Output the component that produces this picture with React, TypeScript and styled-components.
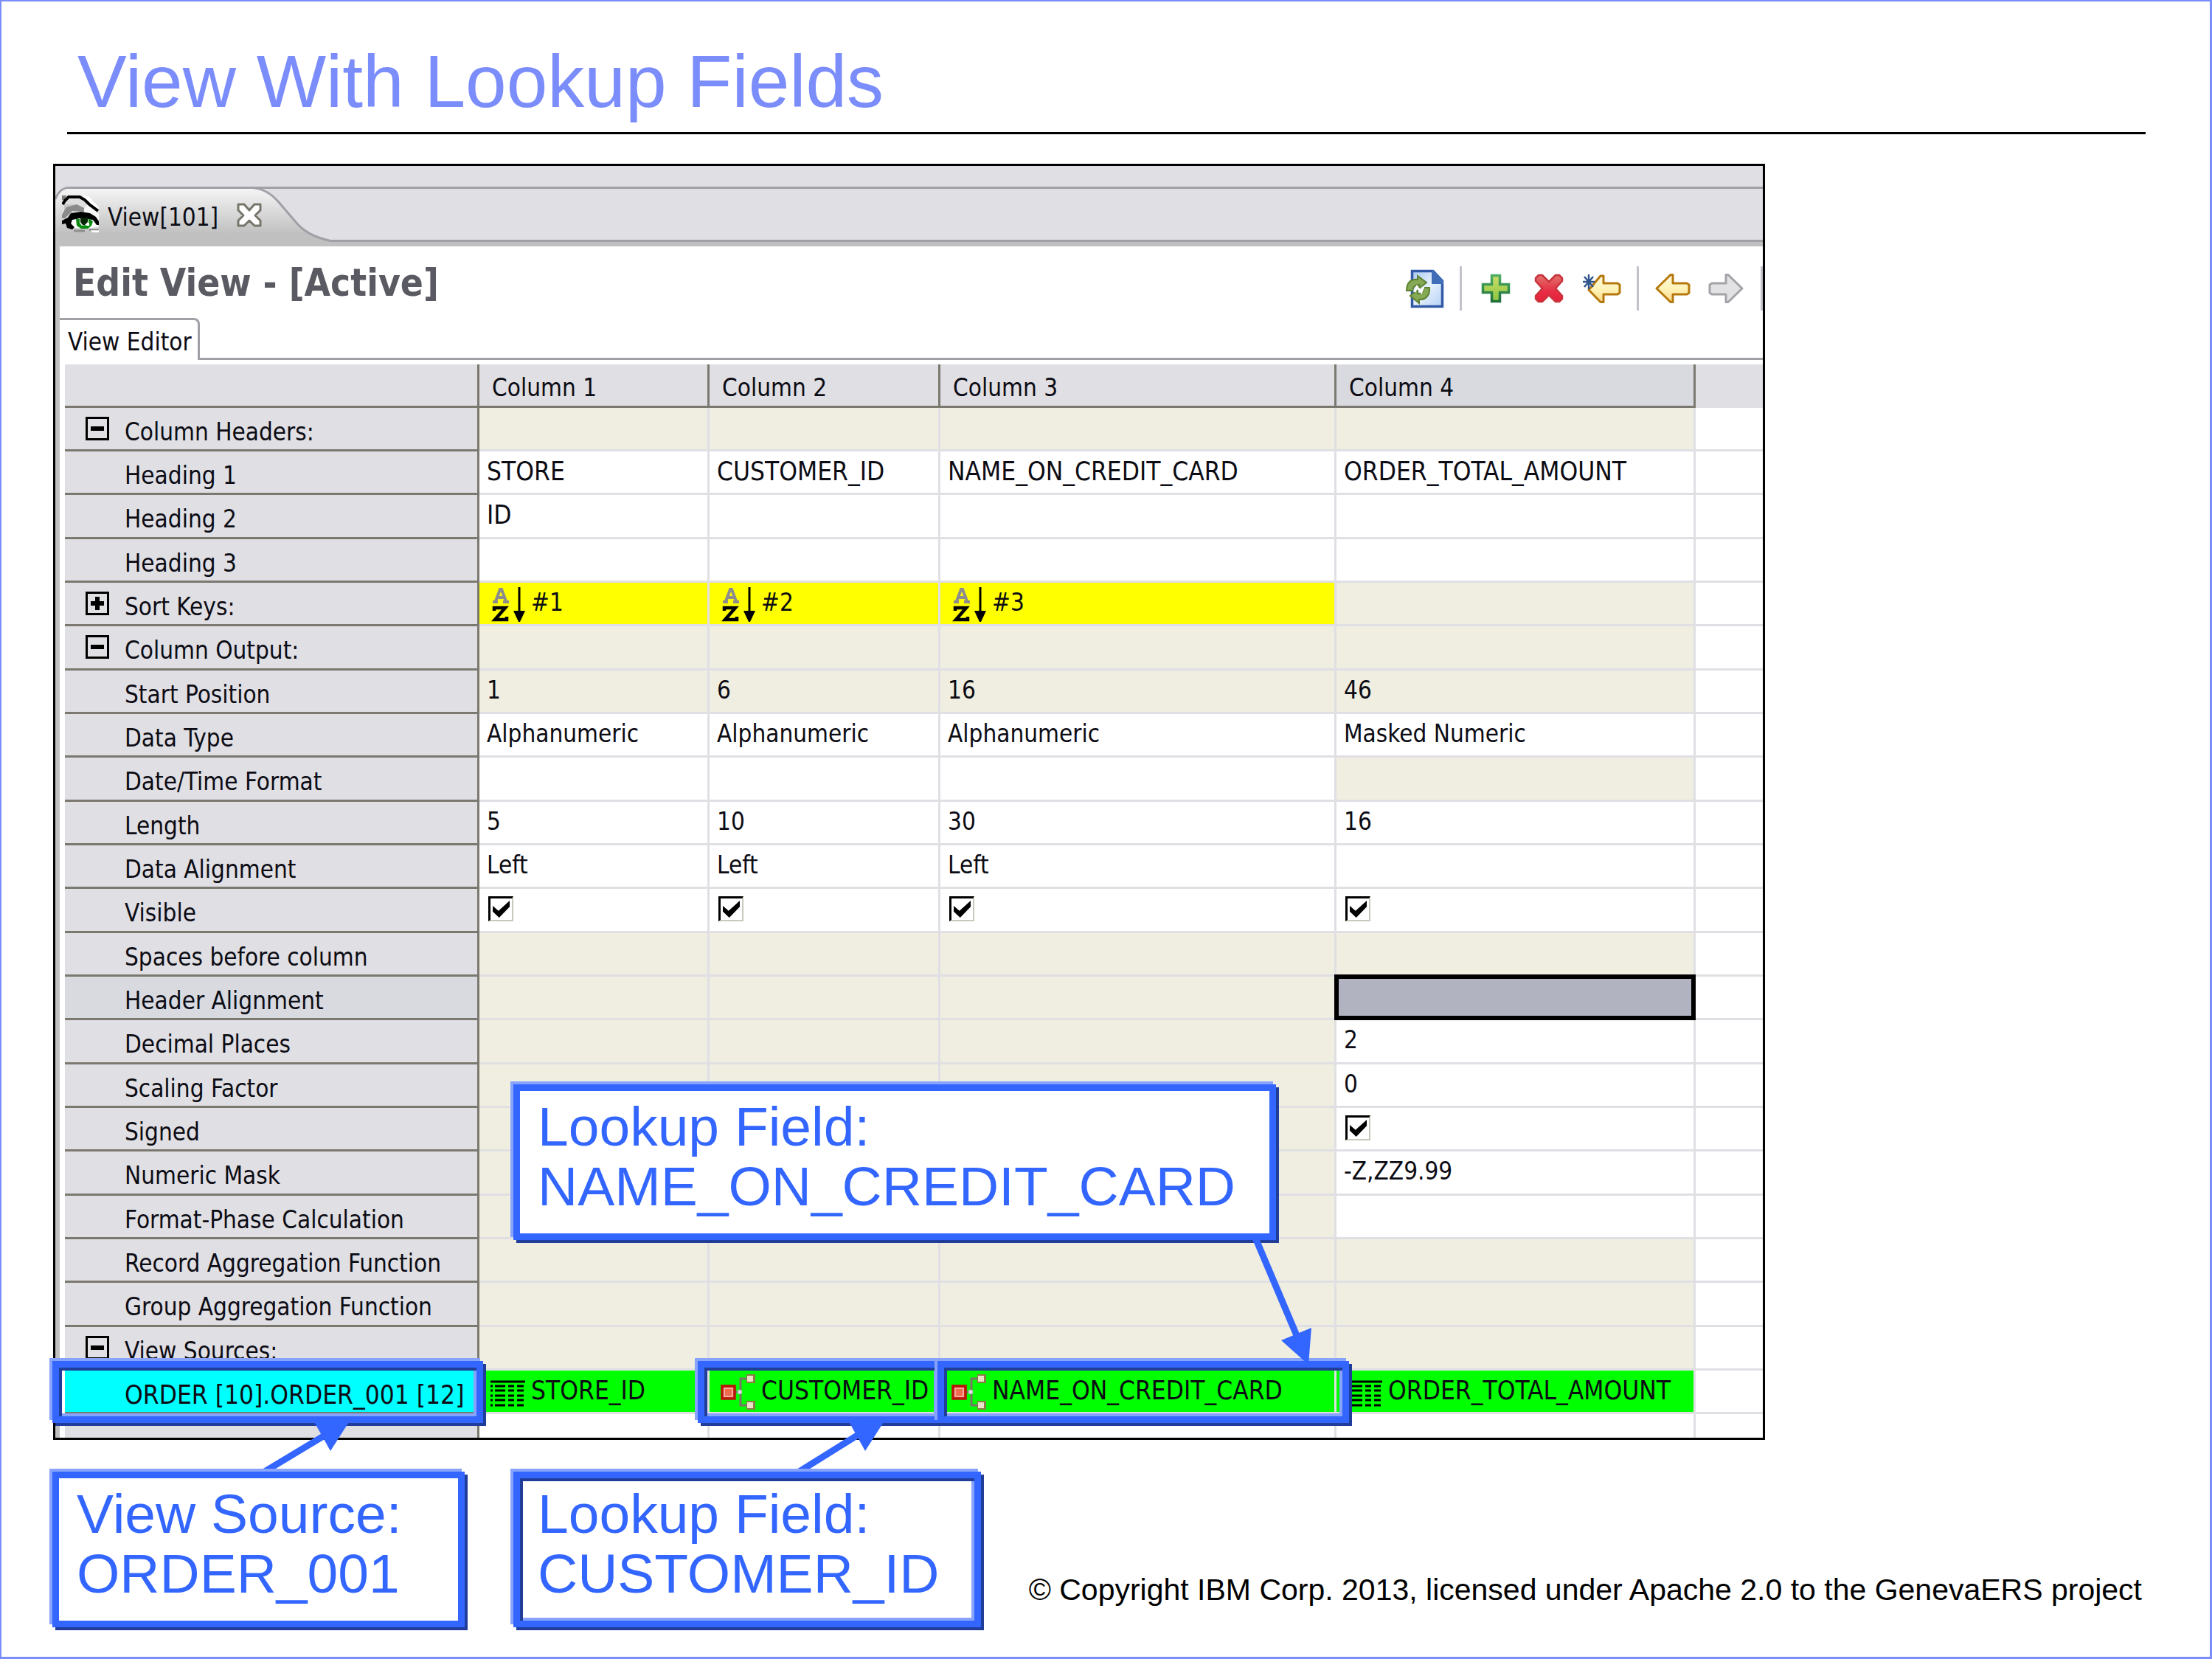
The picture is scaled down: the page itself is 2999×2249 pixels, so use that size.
import React from "react";
import styled, { createGlobalStyle, css } from "styled-components";

const ui = '"DejaVu Sans Condensed", "DejaVu Sans", "Noto Sans", sans-serif';
const slideFont = '"Liberation Sans", Arial, sans-serif';

const color = {
  accent: "#7b8cfb",
  blue: "#3366ff",
  blueLight: "#87a3fb",
  blueDark: "#1f3d99",
  chrome: "#e0dfe4",
  chromeActive: "#d8dae0",
  chromeLine: "#a0a0a6",
  band: "#c0c0c0",
  gridDark: "#7b796f",
  gridLight: "#e0dfe4",
  readOnly: "#f0eee1",
};

const GlobalStyle = createGlobalStyle`
  *, *::before, *::after { box-sizing: border-box; }
  body { margin: 0; background: #fff; }
`;

/* ---------- slide ---------- */

const Slide = styled.main`
  position: relative;
  min-height: 100vh;
  padding-top: 52px;
  background: #fff;
  font-family: ${slideFont};
  overflow: hidden;

  &::after {
    content: "";
    position: absolute;
    inset: 0;
    border: 2px solid ${color.accent};
    border-right-width: 3px;
    border-bottom-width: 3px;
    pointer-events: none;
  }
`;

const SlideHeader = styled.header`
  margin: 0 90px 40px 91px;
  padding: 0 0 11px 14px;
  border-bottom: 3px solid #000;
`;

const SlideTitle = styled.h1`
  margin: 0;
  font-size: 100px;
  line-height: 116px;
  font-weight: 400;
  color: ${color.accent};
`;

const SlideFooter = styled.footer`
  display: flex;
  align-items: flex-start;
  gap: 66px;
  margin: 43px 95px 0 71px;
`;

const Copyright = styled.p`
  flex: 1;
  margin: 136px 0 0 -66px;
  font-size: 41px;
  line-height: 48px;
  text-align: right;
  white-space: nowrap;
  color: #000;
`;

/* ---------- application window ---------- */

const Window = styled.section`
  max-width: 2321px;
  margin-left: 72px;
  border: 3px solid #000;
  background: ${color.chrome};
  font-family: ${ui};
  font-size: 33px;
  line-height: 40px;
  color: #0c0c14;
  overflow: hidden;
`;

const EditorTabs = styled.div`
  display: flex;
  height: 75px;
  margin-top: 28px;
  border-top: 3px solid ${color.chromeLine};
  border-bottom: 3px solid ${color.chromeLine};
`;

const EditorTab = styled.div`
  position: relative;
  display: flex;
  align-items: flex-start;
  width: 380px;
  padding: 9px 0 0 9px;
`;

const TabShape = styled.svg`
  position: absolute;
  left: 0;
  top: -3px;
  width: 380px;
  height: 75px;
`;

const TabIcon = styled.svg`
  position: relative;
  width: 50px;
  height: 50px;
`;

const TabLabel = styled.span`
  position: relative;
  margin: 10px 24px 0 12px;
`;

const CloseButton = styled.button`
  position: relative;
  width: 36px;
  height: 36px;
  margin-top: 8px;
  padding: 0;
  border: 0;
  background: none;

  svg { display: block; width: 36px; height: 36px; }
`;

const Editor = styled.div`
  border-top: 6px solid ${color.band};
  border-left: 6px solid ${color.band};
  background: #fff;
`;

const EditorHeader = styled.div`
  display: flex;
  justify-content: space-between;
  align-items: flex-start;
  height: 97px;
  padding-left: 18px;
`;

const EditorTitle = styled.h2`
  margin: 20px 0 0;
  font-size: 51px;
  line-height: 60px;
  font-weight: 700;
  color: #5a5a62;
`;

const Toolbar = styled.div`
  display: flex;
  align-items: center;
  height: 60px;
  margin-top: 27px;
`;

const ToolButton = styled.button`
  display: flex;
  align-items: center;
  justify-content: center;
  width: 72px;
  height: 60px;
  padding: 0;
  border: 0;
  background: none;

  svg { width: 54px; height: 54px; }
`;

const Separator = styled.span<{ $last?: boolean }>`
  width: ${(p) => (p.$last ? 14 : 24)}px;
  height: 60px;
  display: flex;
  justify-content: ${(p) => (p.$last ? "flex-end" : "center")};

  &::before {
    content: "";
    width: 3px;
    background: #c3c3cb;
  }
`;

const PageTabs = styled.div`
  display: flex;
  height: 57px;

  &::after {
    content: "";
    flex: 1;
    border-bottom: 3px solid ${color.chromeLine};
  }
`;

const PageTab = styled.button`
  min-width: 190px;
  padding: 10px 8px 4px 11px;
  border: solid ${color.chromeLine};
  border-width: 3px 3px 0 0;
  border-top-right-radius: 8px;
  background: #fff;
  font: inherit;
  color: inherit;
  text-align: left;
`;

/* ---------- grid ---------- */

const Grid = styled.table`
  width: calc(100% - 7px);
  margin: 6px 0 0 7px;
  border-collapse: separate;
  border-spacing: 0;
  table-layout: fixed;

  tr { height: 59px; }
  tr > :last-child { border-right: 0; }
  tbody tr:nth-child(3n) { height: 60px; }
  tbody tr:last-child { height: 32px; }
  tbody tr:last-child > * { border-bottom: 0; }
`;

const ColumnHead = styled.th<{ $active?: boolean; $filler?: boolean }>`
  padding: 12px 0 0 17px;
  border: solid ${color.gridDark};
  border-width: 0 3px 3px 0;
  ${(p) => p.$filler && css`border-color: ${color.chrome};`}
  background: ${(p) => (p.$active ? color.chromeActive : color.chrome)};
  font-weight: 400;
  text-align: left;
  vertical-align: top;
`;

const RowHead = styled.th<{ $tone?: "active" | "source" }>`
  padding: 0;
  border: solid ${color.gridDark};
  border-width: 0 3px 3px 0;
  background: ${(p) =>
    p.$tone === "source" ? "#00ffff" : p.$tone === "active" ? color.chromeActive : color.chrome};
  font-size: ${(p) => (p.$tone === "source" ? 35 : 33)}px;
  font-weight: 400;
  text-align: left;
  vertical-align: top;
  white-space: nowrap;
`;

const RowHeadContent = styled.div`
  display: grid;
  grid-template-columns: 32px 1fr;
  column-gap: 21px;
  padding: 13px 0 0 28px;
  height: 53px;
`;

const Toggle = styled.button`
  position: relative;
  width: 32px;
  height: 32px;
  margin-top: -1px;
  padding: 0;
  border: 3px solid #000;
  background: ${color.chrome};

  svg { display: block; width: 26px; height: 26px; }
`;

const RowLabel = styled.span`
  grid-column: 2;
`;

type Tone = "w" | "b" | "y" | "g" | "sel";

const toneColor: Record<Tone, string> = {
  w: "#ffffff",
  b: color.readOnly,
  y: "#ffff00",
  g: "#00ff00",
  sel: "#b2b3c0",
};

const Cell = styled.td<{ $tone: Tone }>`
  padding: 0;
  border: solid ${color.gridLight};
  border-width: 0 3px 3px 0;
  background: ${(p) => toneColor[p.$tone]};
  vertical-align: top;
  white-space: nowrap;
  ${(p) =>
    p.$tone === "sel" &&
    css`
      position: relative;
      &::after {
        content: "";
        position: absolute;
        inset: -3px -3px -3px -3px;
        border: 6px solid #000;
      }
    `}
`;

const CellContent = styled.div<{ $icon?: boolean; $name?: boolean }>`
  display: flex;
  align-items: flex-start;
  gap: 8px;
  height: 53px;
  padding: 5px 0 0 ${(p) => (p.$icon ? 14 : 10)}px;
  font-size: ${(p) => (p.$name ? 35 : 33)}px;
`;

const CellText = styled.span`
  padding-top: 2px;
`;

const CellIcon = styled.svg`
  flex: none;
  width: 48px;
  height: 48px;
`;

const CheckBox = styled.input`
  appearance: none;
  position: relative;
  width: 34px;
  height: 34px;
  margin: 5px 0 0 2px;
  border: solid #c9c8bb;
  border-width: 3px 2px 2px 3px;
  border-top-color: #000;
  border-left-color: #000;
  background: #fff;

  &:checked::before {
    content: "";
    position: absolute;
    inset: 3px 3px 3px 3px;
    background: #000;
    clip-path: polygon(0 30%, 34% 60%, 100% 0, 100% 36%, 38% 100%, 0 64%);
  }
`;

/* ---------- annotations ---------- */

const bevel = "-4px -4px 0 " + color.blueLight + ", 4px 4px 0 " + color.blueDark;
const innerBevel = "inset 4px 4px 0 " + color.blueDark + ", inset -4px -4px 0 " + color.blueLight;

const Highlight = styled.div<{ $x: number; $width: number }>`
  position: absolute;
  left: ${(p) => p.$x}px;
  top: 1845px;
  width: ${(p) => p.$width}px;
  height: 84px;
  border: 9px solid ${color.blue};
  box-shadow: ${bevel}, ${innerBevel};
`;

const Callout = styled.aside<{ $width: number; $inner?: boolean }>`
  position: relative;
  flex: none;
  width: ${(p) => p.$width}px;
  height: 211px;
  padding: 8px 0 0 24px;
  border: 9px solid ${color.blue};
  background: #fff;
  box-shadow: ${bevel}${(p) => (p.$inner ? ", " + innerBevel : "")};
  font-family: ${slideFont};
  font-size: 75px;
  line-height: 81px;
  color: ${color.blue};
  white-space: nowrap;
`;

const FloatingCallout = styled(Callout)`
  position: absolute;
  left: 696px;
  top: 1470px;
`;

const Arrows = styled.svg`
  position: absolute;
  left: 0;
  top: 0;
  width: 2000px;
  height: 2100px;
  pointer-events: none;
`;

/* ---------- icons ---------- */

const EyeIcon = () => (
  <TabIcon viewBox="0 0 50 50" aria-hidden="true">
    <path d="M0 2 H30 L50 18 V46 H44 L10 44 L0 36Z" fill="#dedede" />
    <path d="M28 1 L36 1 L50 16 V21 L33 7Z" fill="#fff" />
    <path d="M34 12 L50 25 V34 L36 26 L28 22Z" fill="#f6f6f6" />
    <path d="M0 0 H6 L4 6 H0Z" fill="#7c7c7c" />
    <path d="M3 12 H16 L22 16 L8 20 L3 24Z" fill="#c6c6c6" />
    <path d="M6 16 L20 12 L30 17 V22 L14 21 L4 31 H0 V26Z" fill="#8b8b8b" />
    <path d="M1 12 L4 7 L9 2 H24 L31 6 L37 12 L49 21" fill="none" stroke="#000" strokeWidth="4" />
    <path d="M12 33 L22 29 L42 29 L49 37 V42 L40 44 H16Z" fill="#fff" />
    <path d="M0 34 L8 30 L12 24 L26 22 L38 24 L46 29 L50 35 V40 H47 L42 33 L24 31 L14 33 L12 38 L17 43 L14 46 L7 44 L5 38 L0 39Z" fill="#000" />
    <path d="M19 32 H24 V37 L27 41 L31 40 V45 H26 L20 41Z" fill="#0b8a12" />
    <path d="M25 30 H35 V36 L31 40 H28 L25 36Z" fill="#062506" />
    <path d="M36 31 L42 35 L40 41 L35 45 H30 V41 L36 39Z" fill="#0b8a12" />
    <path d="M34 37 H37 V41 H33Z" fill="#fff" />
    <path d="M16 48 H31" stroke="#8f8f8f" strokeWidth="3" />
    <path d="M38 48 V46 H50" fill="none" stroke="#8f8f8f" strokeWidth="2" />
    <path d="M40 49 H50" stroke="#fff" strokeWidth="3" />
  </TabIcon>
);

const CloseIcon = () => (
  <svg viewBox="0 0 36 36" aria-hidden="true">
    <path
      d="M3 4 H11 L18 12 L25 4 H33 V12 L26 19 L33 26 V33 H25 L18 26 L11 33 H3 V26 L10 19 L3 12Z"
      fill="#fff"
      stroke="#77756b"
      strokeWidth="3"
      strokeLinejoin="round"
    />
  </svg>
);

const RefreshIcon = () => (
  <svg viewBox="0 0 54 54" aria-hidden="true">
    <defs>
      <linearGradient id="page" x1="0" y1="0" x2="1" y2="1">
        <stop offset="0" stopColor="#a9c8f2" />
        <stop offset="0.5" stopColor="#e6f1fd" />
        <stop offset="1" stopColor="#b4d0f5" />
      </linearGradient>
    </defs>
    <path d="M9.500 3.500 H38 L50.500 17 V51.500 H9.500Z" fill="url(#page)" stroke="#3159a6" strokeWidth="3.500" />
    <path d="M38 2 L52 17 V21 H36 V2Z" fill="#3f6db8" />
    <path d="M2 30 C2 18 9 14 17 15 V10 L29 19 L19 27 V22 C13 22 10 26 10 30Z" fill="#85a954" stroke="#5d8233" strokeWidth="2" />
    <path d="M33 26 C34 37 27 43 19 42 V47 L7 37 L17 29 V34 C23 34 26 31 25 26Z" fill="#85a954" stroke="#5d8233" strokeWidth="2" />
    <path d="M13 32 L16 25 L22 32 L25 25" stroke="#fff" strokeWidth="3" fill="none" />
  </svg>
);

const AddIcon = () => (
  <svg viewBox="0 0 54 54" aria-hidden="true">
    <defs>
      <linearGradient id="add" x1="0" y1="0" x2="0" y2="1">
        <stop offset="0" stopColor="#c9dd6a" />
        <stop offset="1" stopColor="#8cc63f" />
      </linearGradient>
      <linearGradient id="addEdge" x1="0" y1="0" x2="0" y2="1">
        <stop offset="0" stopColor="#4fae62" />
        <stop offset="1" stopColor="#1d6f3c" />
      </linearGradient>
    </defs>
    <path d="M21.500 9.500 H32.500 V21.500 H44.500 V32.500 H32.500 V44.500 H21.500 V32.500 H9.500 V21.500 H21.500Z" fill="url(#add)" stroke="url(#addEdge)" strokeWidth="3.500" />
  </svg>
);

const DeleteIcon = () => (
  <svg viewBox="0 0 54 54" aria-hidden="true">
    <defs>
      <linearGradient id="del" x1="0" y1="0" x2="0" y2="1">
        <stop offset="0" stopColor="#e2736c" />
        <stop offset="0.600" stopColor="#e62e45" />
        <stop offset="1" stopColor="#e8203c" />
      </linearGradient>
    </defs>
    <path
      d="M13 9 H18 L27 18 L36 9 H41 L45 13 V17 L36 27 L45 37 V41 L41 45 H36 L27 36 L18 45 H13 L9 41 V37 L18 27 L9 17 V13Z"
      fill="url(#del)"
      stroke="#c9333b"
      strokeWidth="2.500"
      strokeLinejoin="round"
    />
  </svg>
);

const arrowPath = "M5 27 L24 8.500 H27 V20 H46 L49 22 V33 L46 35 H27 V45.500 H24Z";

const ArrowGradient = ({ id }: { id: string }) => (
  <defs>
    <linearGradient id={id} x1="0" y1="0" x2="0" y2="1">
      <stop offset="0" stopColor="#fffbe0" />
      <stop offset="0.500" stopColor="#fff3b8" />
      <stop offset="1" stopColor="#fbd98a" />
    </linearGradient>
  </defs>
);

const BackIcon = () => (
  <svg viewBox="0 0 54 54" aria-hidden="true">
    <ArrowGradient id="back" />
    <path d={arrowPath} fill="url(#back)" stroke="#b5780c" strokeWidth="3" strokeLinejoin="round" />
  </svg>
);

const LastEditIcon = () => (
  <svg viewBox="0 0 54 54" aria-hidden="true">
    <ArrowGradient id="lastEdit" />
    <path d="M9 29 L25 10 H29 V20 H48 L51 22 V33 L48 35 H29 V45.500 H25Z" fill="url(#lastEdit)" stroke="#b5780c" strokeWidth="3" strokeLinejoin="round" />
    <path d="M9 8 V28 M1 18 H17 M3 11 L15 25 M15 11 L3 25" stroke="#2f568c" strokeWidth="2.500" />
  </svg>
);

const ForwardIcon = () => (
  <svg viewBox="0 0 54 54" aria-hidden="true">
    <path d={arrowPath} transform="translate(54 0) scale(-1 1)" fill="#e2e2e5" stroke="#a3a3a8" strokeWidth="3" strokeLinejoin="round" />
  </svg>
);

const SortIcon = () => (
  <CellIcon viewBox="0 0 48 48" aria-hidden="true">
    <path d="M4 21 H11 M18 21 H26 M8 20 L14 4 H16 L22 20 M11 15 H20" fill="none" stroke="#8d8d8d" strokeWidth="4" />
    <path d="M6 33 V29 H21 L7 45 H23 V41" fill="none" stroke="#000" strokeWidth="4.500" />
    <path d="M40 1 V36" stroke="#000" strokeWidth="3" />
    <path d="M32 33 H48 L41 48 H39Z" fill="#000" />
  </CellIcon>
);

const FieldIcon = () => (
  <CellIcon viewBox="0 0 48 48" aria-hidden="true">
    <path d="M1 10 H48" stroke="#000" strokeWidth="3" />
    {[16, 22, 29, 35, 42].map((y) => (
      <path key={y} d={`M1 ${y} H4 M7 ${y} H21 M25 ${y} H33 M37 ${y} H46`} stroke="#000" strokeWidth="3" />
    ))}
  </CellIcon>
);

const LookupIcon = () => (
  <CellIcon viewBox="0 0 48 48" aria-hidden="true">
    <path d="M19 24 H28 M39 6 H28 V42 H39" fill="none" stroke="#7a7468" strokeWidth="3" />
    <circle cx="27" cy="24" r="3" fill="#d9d4e6" />
    <rect x="3" y="16" width="17" height="17" fill="#f06a50" stroke="#b81408" strokeWidth="3.500" />
    <rect x="6" y="19" width="11" height="11" fill="none" stroke="#f8a898" strokeWidth="2" />
    {[6, 42].map((y) => (
      <g key={y}>
        <rect x="36" y={y - 6} width="12" height="12" fill="#8a7b45" />
        <rect x="37" y={y - 4} width="8" height="8" fill="#e9e4c9" />
      </g>
    ))}
  </CellIcon>
);

/* ---------- data ---------- */

type Value = {
  tone: Tone;
  text?: string;
  check?: boolean;
  icon?: "sort" | "field" | "lookup";
  name?: boolean;
};

type Row = {
  label: string;
  toggle?: "open" | "closed";
  tone?: "active" | "source";
  cells: Value[];
};

const plain = (tone: Tone, ...texts: string[]): Value[] =>
  [0, 1, 2, 3].map((i) => ({ tone, text: texts[i] }));

const lastOnly = (cell: Value): Value[] => [{ tone: "b" }, { tone: "b" }, { tone: "b" }, cell];

const names = ["STORE", "CUSTOMER_ID", "NAME_ON_CREDIT_CARD", "ORDER_TOTAL_AMOUNT"];

const rows: Row[] = [
  { label: "Column Headers:", toggle: "open", cells: plain("b") },
  { label: "Heading 1", cells: names.map((text) => ({ tone: "w", text, name: true })) },
  { label: "Heading 2", cells: plain("w", "ID").map((c) => ({ ...c, name: true })) },
  { label: "Heading 3", cells: plain("w") },
  {
    label: "Sort Keys:",
    toggle: "closed",
    cells: [
      { tone: "y", icon: "sort", text: "#1" },
      { tone: "y", icon: "sort", text: "#2" },
      { tone: "y", icon: "sort", text: "#3" },
      { tone: "b" },
    ],
  },
  { label: "Column Output:", toggle: "open", cells: plain("b") },
  { label: "Start Position", cells: plain("b", "1", "6", "16", "46") },
  { label: "Data Type", cells: plain("w", "Alphanumeric", "Alphanumeric", "Alphanumeric", "Masked Numeric") },
  { label: "Date/Time Format", cells: [{ tone: "w" }, { tone: "w" }, { tone: "w" }, { tone: "b" }] },
  { label: "Length", cells: plain("w", "5", "10", "30", "16") },
  { label: "Data Alignment", cells: plain("w", "Left", "Left", "Left") },
  { label: "Visible", cells: plain("w").map((c) => ({ ...c, check: true })) },
  { label: "Spaces before column", cells: plain("b") },
  { label: "Header Alignment", tone: "active", cells: lastOnly({ tone: "sel" }) },
  { label: "Decimal Places", cells: lastOnly({ tone: "w", text: "2" }) },
  { label: "Scaling Factor", cells: lastOnly({ tone: "w", text: "0" }) },
  { label: "Signed", cells: lastOnly({ tone: "w", check: true }) },
  { label: "Numeric Mask", cells: lastOnly({ tone: "w", text: "-Z,ZZ9.99" }) },
  { label: "Format-Phase Calculation", cells: lastOnly({ tone: "w" }) },
  { label: "Record Aggregation Function", cells: plain("b") },
  { label: "Group Aggregation Function", cells: plain("b") },
  { label: "View Sources:", toggle: "open", cells: plain("b") },
  {
    label: "ORDER [10].ORDER_001 [12]",
    tone: "source",
    cells: [
      { tone: "g", icon: "field", text: "STORE_ID", name: true },
      { tone: "g", icon: "lookup", text: "CUSTOMER_ID", name: true },
      { tone: "g", icon: "lookup", text: "NAME_ON_CREDIT_CARD", name: true },
      { tone: "g", icon: "field", text: "ORDER_TOTAL_AMOUNT", name: true },
    ],
  },
];

const icons = { sort: SortIcon, field: FieldIcon, lookup: LookupIcon };

const GridCell = ({ value, label }: { value: Value; label: string }) => {
  const Icon = value.icon ? icons[value.icon] : null;
  return (
    <Cell $tone={value.tone}>
      {(value.text || value.check) && (
        <CellContent $icon={!!value.icon} $name={value.name}>
          {Icon && <Icon />}
          {value.check && <CheckBox type="checkbox" defaultChecked aria-label={label} />}
          {value.text && <CellText>{value.text}</CellText>}
        </CellContent>
      )}
    </Cell>
  );
};

const Column = styled.col<{ $width?: number }>`
  ${(p) => p.$width && css`width: ${p.$width}px;`}
`;

const ViewGrid = () => (
  <Grid>
    <colgroup>
      <Column $width={562} />
      <Column $width={312} />
      <Column $width={313} />
      <Column $width={537} />
      <Column $width={487} />
      <Column />
    </colgroup>
    <thead>
      <tr>
        <ColumnHead />
        <ColumnHead scope="col">Column 1</ColumnHead>
        <ColumnHead scope="col">Column 2</ColumnHead>
        <ColumnHead scope="col">Column 3</ColumnHead>
        <ColumnHead scope="col" $active>Column 4</ColumnHead>
        <ColumnHead $filler />
      </tr>
    </thead>
    <tbody>
      {rows.map((row) => (
        <tr key={row.label}>
          <RowHead scope="row" $tone={row.tone}>
            <RowHeadContent>
              {row.toggle && (
                <Toggle aria-label={row.label} aria-expanded={row.toggle === "open"}>
                  <svg viewBox="0 0 26 26" aria-hidden="true">
                    <path d={row.toggle === "open" ? "M4 13 H22" : "M4 13 H22 M13 4 V22"} stroke="#000" strokeWidth="6" />
                  </svg>
                </Toggle>
              )}
              <RowLabel>{row.label}</RowLabel>
            </RowHeadContent>
          </RowHead>
          {row.cells.map((value, i) => (
            <GridCell key={i} value={value} label={`${row.label}, column ${i + 1}`} />
          ))}
          <Cell $tone="w" />
        </tr>
      ))}
      <tr>
        <RowHead />
        {plain("w").map((_, i) => (
          <Cell key={i} $tone="w" />
        ))}
        <Cell $tone="w" />
      </tr>
    </tbody>
  </Grid>
);

export default function App() {
  return (
    <Slide>
      <GlobalStyle />
      <SlideHeader>
        <SlideTitle>View With Lookup Fields</SlideTitle>
      </SlideHeader>

      <Window>
        <EditorTabs>
          <EditorTab>
            <TabShape viewBox="0 0 380 75" aria-hidden="true">
              <defs>
                <linearGradient id="tab" x1="0" y1="0" x2="0" y2="1">
                  <stop offset="0" stopColor="#f6f6f7" />
                  <stop offset="0.850" stopColor="#c0c0c0" />
                </linearGradient>
              </defs>
              <path d="M0 0 H16 L0 16Z" fill={color.chrome} />
              <path
                d="M0 75 V17 C3 9 9 2 17 1.500 H268 C285 3 295 12 302 20 L326 48 C337 61 350 68 373 73.500 H380 V75Z"
                fill="url(#tab)"
              />
              <path
                d="M0 17 C3 9 9 2 17 1.500 H268 C285 3 295 12 302 20 L326 48 C337 61 350 68 373 73.500 H380"
                fill="none"
                stroke={color.chromeLine}
                strokeWidth="3"
              />
            </TabShape>
            <EyeIcon />
            <TabLabel>View[101]</TabLabel>
            <CloseButton aria-label="Close">
              <CloseIcon />
            </CloseButton>
          </EditorTab>
        </EditorTabs>

        <Editor>
          <EditorHeader>
            <EditorTitle>Edit View - [Active]</EditorTitle>
            <Toolbar>
              <ToolButton aria-label="Refresh"><RefreshIcon /></ToolButton>
              <Separator />
              <ToolButton aria-label="Add"><AddIcon /></ToolButton>
              <ToolButton aria-label="Delete"><DeleteIcon /></ToolButton>
              <ToolButton aria-label="Last edit"><LastEditIcon /></ToolButton>
              <Separator />
              <ToolButton aria-label="Back"><BackIcon /></ToolButton>
              <ToolButton aria-label="Forward"><ForwardIcon /></ToolButton>
              <Separator $last />
            </Toolbar>
          </EditorHeader>
          <PageTabs>
            <PageTab>View Editor</PageTab>
          </PageTabs>
          <ViewGrid />
        </Editor>
      </Window>

      <Highlight $x={71} $width={584} />
      <Highlight $x={946} $width={333} />
      <Highlight $x={1271} $width={558} />
      <FloatingCallout $width={1034}>
        Lookup Field:
        <br />
        NAME_ON_CREDIT_CARD
      </FloatingCallout>
      <Arrows viewBox="0 0 2000 2100" aria-hidden="true">
        <g stroke={color.blue} strokeWidth="9">
          <path d="M352 1999 L445 1943" />
          <path d="M1077 1999 L1170 1941" />
          <path d="M1702 1678 L1760 1815" />
        </g>
        <g fill={color.blue}>
          <path d="M478 1920 L448 1967 L424 1924Z" />
          <path d="M1203 1920 L1173 1967 L1148 1922Z" />
          <path d="M1774 1850 L1737 1817 L1778 1800Z" />
        </g>
      </Arrows>

      <SlideFooter>
        <Callout $width={559}>
          View Source:
          <br />
          ORDER_001
        </Callout>
        <Callout $width={634} $inner>
          Lookup Field:
          <br />
          CUSTOMER_ID
        </Callout>
        <Copyright>© Copyright IBM Corp. 2013, licensed under Apache 2.0 to the GenevaERS project</Copyright>
      </SlideFooter>
    </Slide>
  );
}
